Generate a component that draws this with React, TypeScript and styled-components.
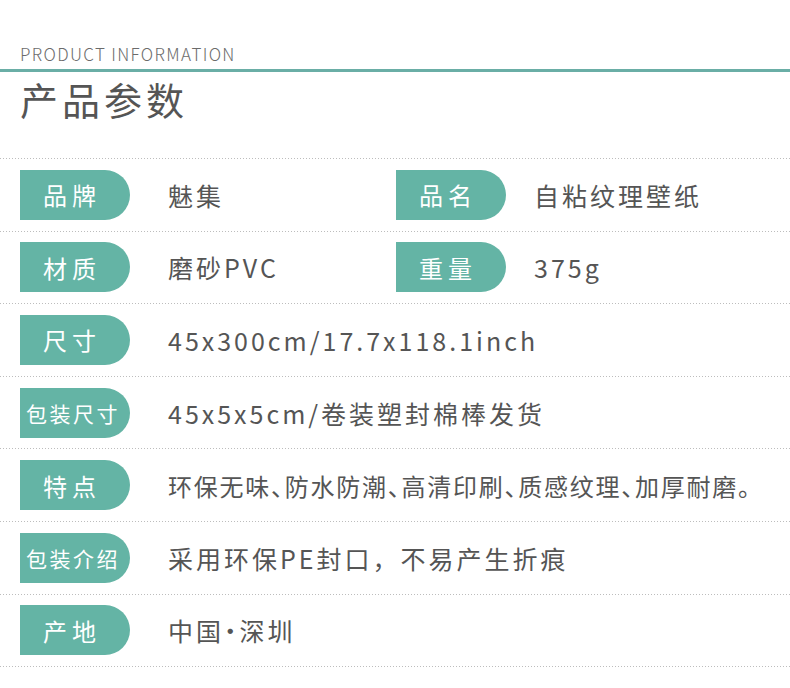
import styled, { createGlobalStyle } from "styled-components";

const GlobalStyle = createGlobalStyle`
  html, body {
    margin: 0;
    padding: 0;
    background: #fff;
  }
  body {
    font-family: "Noto Sans CJK SC", "Noto Sans", sans-serif;
  }
`

interface Field {
    label: string;
    value: string;
    small?: boolean;   // four-character labels
    dense?: boolean;   // long list row
    halfPunct?: boolean;
}

const rows: Field[][] = [
    [{ label: "品牌", value: "魅集" }, { label: "品名", value: "自粘纹理壁纸" }],
    [{ label: "材质", value: "磨砂PVC" }, { label: "重量", value: "375g" }],
    [{ label: "尺寸", value: "45x300cm/17.7x118.1inch" }],
    [{ label: "包装尺寸", value: "45x5x5cm/卷装塑封棉棒发货", small: true }],
    [{ label: "特点", value: "环保无味、防水防潮、高清印刷、质感纹理、加厚耐磨。", dense: true, halfPunct: true }],
    [{ label: "包装介绍", value: "采用环保PE封口，不易产生折痕", small: true }],
    [{ label: "产地", value: "中国·深圳", halfPunct: true }],
]

export default function App() {
    return (
        <Page>
            <GlobalStyle />
            <Header>
                <Eyebrow>PRODUCT INFORMATION</Eyebrow>
                <Rule />
                <Title>产品参数</Title>
            </Header>
            <Table>
                {rows.map((row, i) => (
                    <Row key={i}>
                        {row.map((f, j) => (
                            <Pair key={f.label} $gap={j === 0 ? 38 : 28} $wide={j === 0}>
                                <Pill $small={!!f.small}>{f.label}</Pill>
                                <Value $dense={!!f.dense} $half={!!f.halfPunct}>{f.value}</Value>
                            </Pair>
                        ))}
                    </Row>
                ))}
            </Table>
        </Page>
    )
}

const Page = styled.div`
    width: 790px;
    height: 688px;
    overflow: hidden;
    background: #fff;
`
const Header = styled.div`
    padding-top: 42px;
`
const Eyebrow = styled.div`
    padding-left: 20px;
    font-size: 17px;
    font-weight: 300;
    line-height: 24px;
    letter-spacing: 1.35px;
    color: #6b6b6b;
`
const Rule = styled.div`
    height: 3px;
    margin-top: 3px;
    background: #6aaea6;
`
const Title = styled.h1`
    margin: 0;
    padding-left: 20px;
    height: 86px;
    font-size: 38px;
    font-weight: 400;
    line-height: 54px;
    letter-spacing: 4px;
    color: #555;
`
const Table = styled.div`
    display: flex;
    flex-direction: column;
`
const dots = "repeating-linear-gradient(to right, #bdbdbd 0 1px, transparent 1px 3px)"
const Row = styled.div`
    height: 72.6px;
    box-sizing: border-box;
    display: flex;
    align-items: center;
    padding: 1px 0 0 20px;
    background-image: ${dots};
    background-size: 100% 1px;
    background-repeat: no-repeat;
    background-position: top left;
    &:last-child{
        height: 73.6px;
        padding-bottom: 1px;
        background-image: ${dots}, ${dots};
        background-position: top left, bottom left;
        background-size: 100% 1px, 100% 1px;
    }
`
const Pair = styled.div<{ $gap: number; $wide: boolean }>`
    display: flex;
    align-items: center;
    gap: ${p => p.$gap}px;
    width: ${p => (p.$wide ? "376px" : "auto")};
    flex-shrink: 0;
`
const Pill = styled.div<{ $small: boolean }>`
    width: 110px;
    height: 50px;
    flex-shrink: 0;
    display: flex;
    align-items: center;
    justify-content: center;
    box-sizing: border-box;
    padding-right: ${p => (p.$small ? 4 : 6)}px;
    background: #64b4a5;
    border-radius: 0 25px 25px 0;
    color: #fff;
    font-size: ${p => (p.$small ? 21 : 24)}px;
    letter-spacing: ${p => (p.$small ? 2.5 : 5)}px;
    white-space: nowrap;
`
const Value = styled.div<{ $dense: boolean; $half: boolean }>`
    font-size: ${p => (p.$dense ? 24 : 25)}px;
    letter-spacing: ${p => (p.$dense ? 1.75 : 3)}px;
    font-feature-settings: ${p => (p.$half ? '"halt"' : "normal")};
    color: #555;
    white-space: nowrap;
`
